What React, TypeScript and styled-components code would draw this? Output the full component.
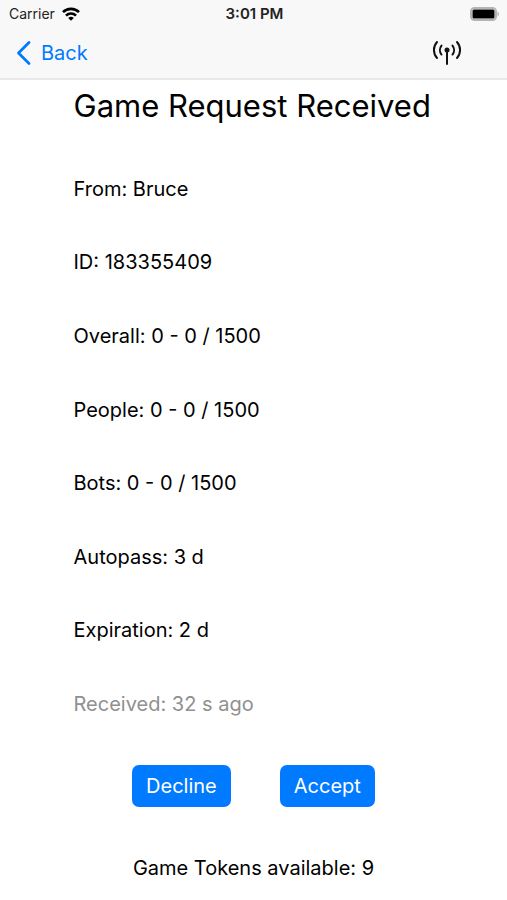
import React from 'react';
import styled, { createGlobalStyle } from 'styled-components';

const Global = createGlobalStyle`
  * { box-sizing: border-box; }
  body { margin: 0; background: #fff; color: #000; font-family: Inter, "Liberation Sans", sans-serif; }
`;

const Screen = styled.div`
  min-height: 100vh;
  display: flex;
  flex-direction: column;
`;

const Header = styled.header`
  background: #f8f8f8;
  border-bottom: 2px solid #e9e9e9;
`;

const StatusBar = styled.div`
  display: grid;
  grid-template-columns: 1fr auto 1fr;
  align-items: center;
  height: 27px;
  padding: 0 7px 0 9px;
  font-size: 14px;
  color: #222;
`;

const Carrier = styled.div`
  display: flex;
  align-items: center;
  gap: 7px;
`;

const Clock = styled.time`
  font-size: 15px;
  font-weight: 600;
`;

const Battery = styled.svg`
  justify-self: end;
`;

const NavBar = styled.nav`
  display: flex;
  justify-content: space-between;
  align-items: center;
  height: 51px;
  padding: 0 45px 0 16px;
`;

const BackLink = styled.a`
  display: flex;
  align-items: center;
  gap: 9px;
  color: #007aff;
  font-size: 20px;
  text-decoration: none;
`;

const IconButton = styled.button`
  display: flex;
  padding: 0;
  border: 0;
  background: none;
  color: #111;
`;

const Content = styled.main`
  flex: 1;
  display: flex;
  flex-direction: column;
  align-items: center;
  padding: 5px 16px 20px;
`;

const Details = styled.section`
  flex: 1;
  display: flex;
  flex-direction: column;
  justify-content: space-between;
  gap: 16px;
  width: 100%;
  max-width: 360px;
`;

const Title = styled.h1`
  margin: 0;
  font-size: 31px;
  line-height: 42px;
  font-weight: 400;
`;

const Line = styled.p<{ $muted?: boolean }>`
  margin: 0;
  font-size: 20px;
  line-height: 24px;
  color: ${({ $muted }) => ($muted ? '#909090' : '#000')};
`;

const Actions = styled.div`
  display: flex;
  gap: 49px;
  margin: 49px 0;
`;

const ActionButton = styled.button`
  height: 42px;
  padding: 0 14px;
  border: 0;
  border-radius: 7px;
  background: #007aff;
  color: #fff;
  font: inherit;
  font-size: 20px;
`;

const details = [
  'From: Bruce',
  'ID: 183355409',
  'Overall: 0 - 0 / 1500',
  'People: 0 - 0 / 1500',
  'Bots: 0 - 0 / 1500',
  'Autopass: 3 d',
  'Expiration: 2 d',
];

export default function App() {
  return (
    <Screen>
      <Global />
      <Header>
        <StatusBar>
          <Carrier>
            Carrier
            <svg width="18" height="14" viewBox="0 0 18 14" fill="none" stroke="#000" strokeWidth="2.6" aria-hidden="true">
              <path d="M1 5.2a11.3 11.3 0 0 1 16 0" />
              <path d="M4 8.6a7 7 0 0 1 10 0" />
              <path d="M9 13.8 6.2 11a4 4 0 0 1 5.6 0Z" fill="#000" stroke="none" />
            </svg>
          </Carrier>
          <Clock>3:01 PM</Clock>
          <Battery width="30" height="14" viewBox="0 0 30 14" aria-hidden="true">
            <rect x="1" y="1" width="25" height="12" rx="3.5" fill="none" stroke="#b4b4b4" strokeWidth="2" />
            <rect x="2.5" y="2.5" width="22" height="9" rx="1.5" />
            <path d="M27.5 4.5a2.8 2.8 0 0 1 0 5Z" fill="#b4b4b4" />
          </Battery>
        </StatusBar>
        <NavBar>
          <BackLink href="#back">
            <svg width="16" height="26" viewBox="0 0 16 26" fill="none" stroke="currentColor" strokeWidth="2.8" strokeLinecap="round" strokeLinejoin="round" aria-hidden="true">
              <path d="M13 2.5 2.5 13 13 23.5" />
            </svg>
            Back
          </BackLink>
          <IconButton type="button" aria-label="Connection">
            <svg width="30" height="26" viewBox="0 0 30 26" fill="none" stroke="currentColor" strokeWidth="2" strokeLinecap="round" aria-hidden="true">
              <path d="M15 10v14M9.5 5.5a7.2 7.2 0 0 0 0 9M20.5 5.5a7.2 7.2 0 0 1 0 9M5 2a12 12 0 0 0 0 16M25 2a12 12 0 0 1 0 16" />
              <circle cx="15" cy="10" r="2.5" fill="currentColor" stroke="none" />
            </svg>
          </IconButton>
        </NavBar>
      </Header>
      <Content>
        <Details>
          <Title>Game Request Received</Title>
          {details.map((text) => (
            <Line key={text}>{text}</Line>
          ))}
          <Line $muted>Received: 32 s ago</Line>
        </Details>
        <Actions>
          <ActionButton type="button">Decline</ActionButton>
          <ActionButton type="button">Accept</ActionButton>
        </Actions>
        <Line>Game Tokens available: 9</Line>
      </Content>
    </Screen>
  );
}
